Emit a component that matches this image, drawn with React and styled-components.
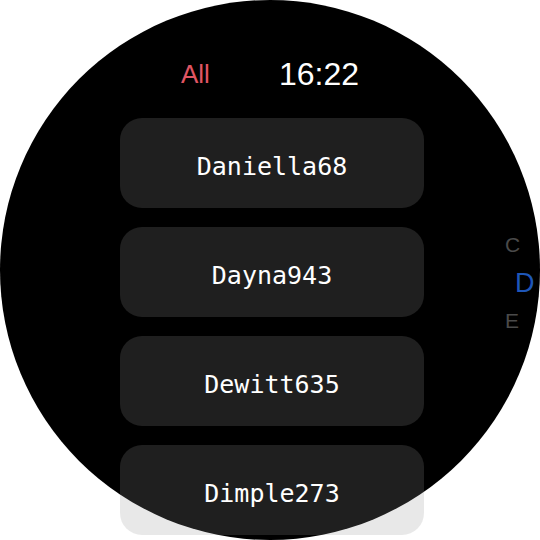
import styled, { createGlobalStyle } from "styled-components";

const GlobalStyle = createGlobalStyle`
  html, body {
    margin: 0;
    padding: 0;
    background: #ffffff;
    overflow: hidden;
  }
`;

const Watch = styled.div`
  position: relative;
  box-sizing: border-box;
  width: 540px;
  height: 540px;
  border-radius: 50%;
  background: #000000;
  display: flex;
  flex-direction: column;
  align-items: center;
  padding-top: 58px;
`;

const Header = styled.div`
  display: flex;
  align-items: center;
  justify-content: center;
  gap: 69px;
  height: 32px;
  font-family: "Liberation Sans", Arial, sans-serif;
`;

const Filter = styled.div`
  font-size: 26px;
  line-height: 26px;
  color: #e05563;
`;

const Clock = styled.div`
  font-size: 32px;
  line-height: 32px;
  color: #ffffff;
`;

const List = styled.div`
  display: flex;
  flex-direction: column;
  gap: 19px;
  margin-top: 28px;
  margin-left: 4px;
`;

const Contact = styled.div`
  box-sizing: border-box;
  width: 304px;
  height: 90px;
  border-radius: 22px;
  background: rgba(146, 146, 146, 0.21);
  display: flex;
  align-items: center;
  justify-content: center;
  padding-top: 6px;
  font-family: "DejaVu Sans Mono", monospace;
  font-size: 25px;
  color: #ffffff;
`;

const Index = styled.div`
  position: absolute;
  top: 226px;
  left: 505px;
  display: flex;
  flex-direction: column;
  align-items: flex-start;
  font-family: "Liberation Sans", Arial, sans-serif;
`;

const Letter = styled.div`
  height: 38px;
  line-height: 38px;
  font-size: ${(props) => (props.$active ? "27px" : "21px")};
  color: ${(props) => (props.$active ? "#1e56b8" : "#4a4a4a")};
  margin-left: ${(props) => (props.$active ? "10px" : "0")};
`;

const contacts = ["Daniella68", "Dayna943", "Dewitt635", "Dimple273"];

export default function App() {
  return (
    <>
      <GlobalStyle />
      <Watch>
        <Header>
          <Filter>All</Filter>
          <Clock>16:22</Clock>
        </Header>
        <List>
          {contacts.map((name) => (
            <Contact key={name}>{name}</Contact>
          ))}
        </List>
        <Index>
          <Letter>C</Letter>
          <Letter $active>D</Letter>
          <Letter>E</Letter>
        </Index>
      </Watch>
    </>
  );
}
